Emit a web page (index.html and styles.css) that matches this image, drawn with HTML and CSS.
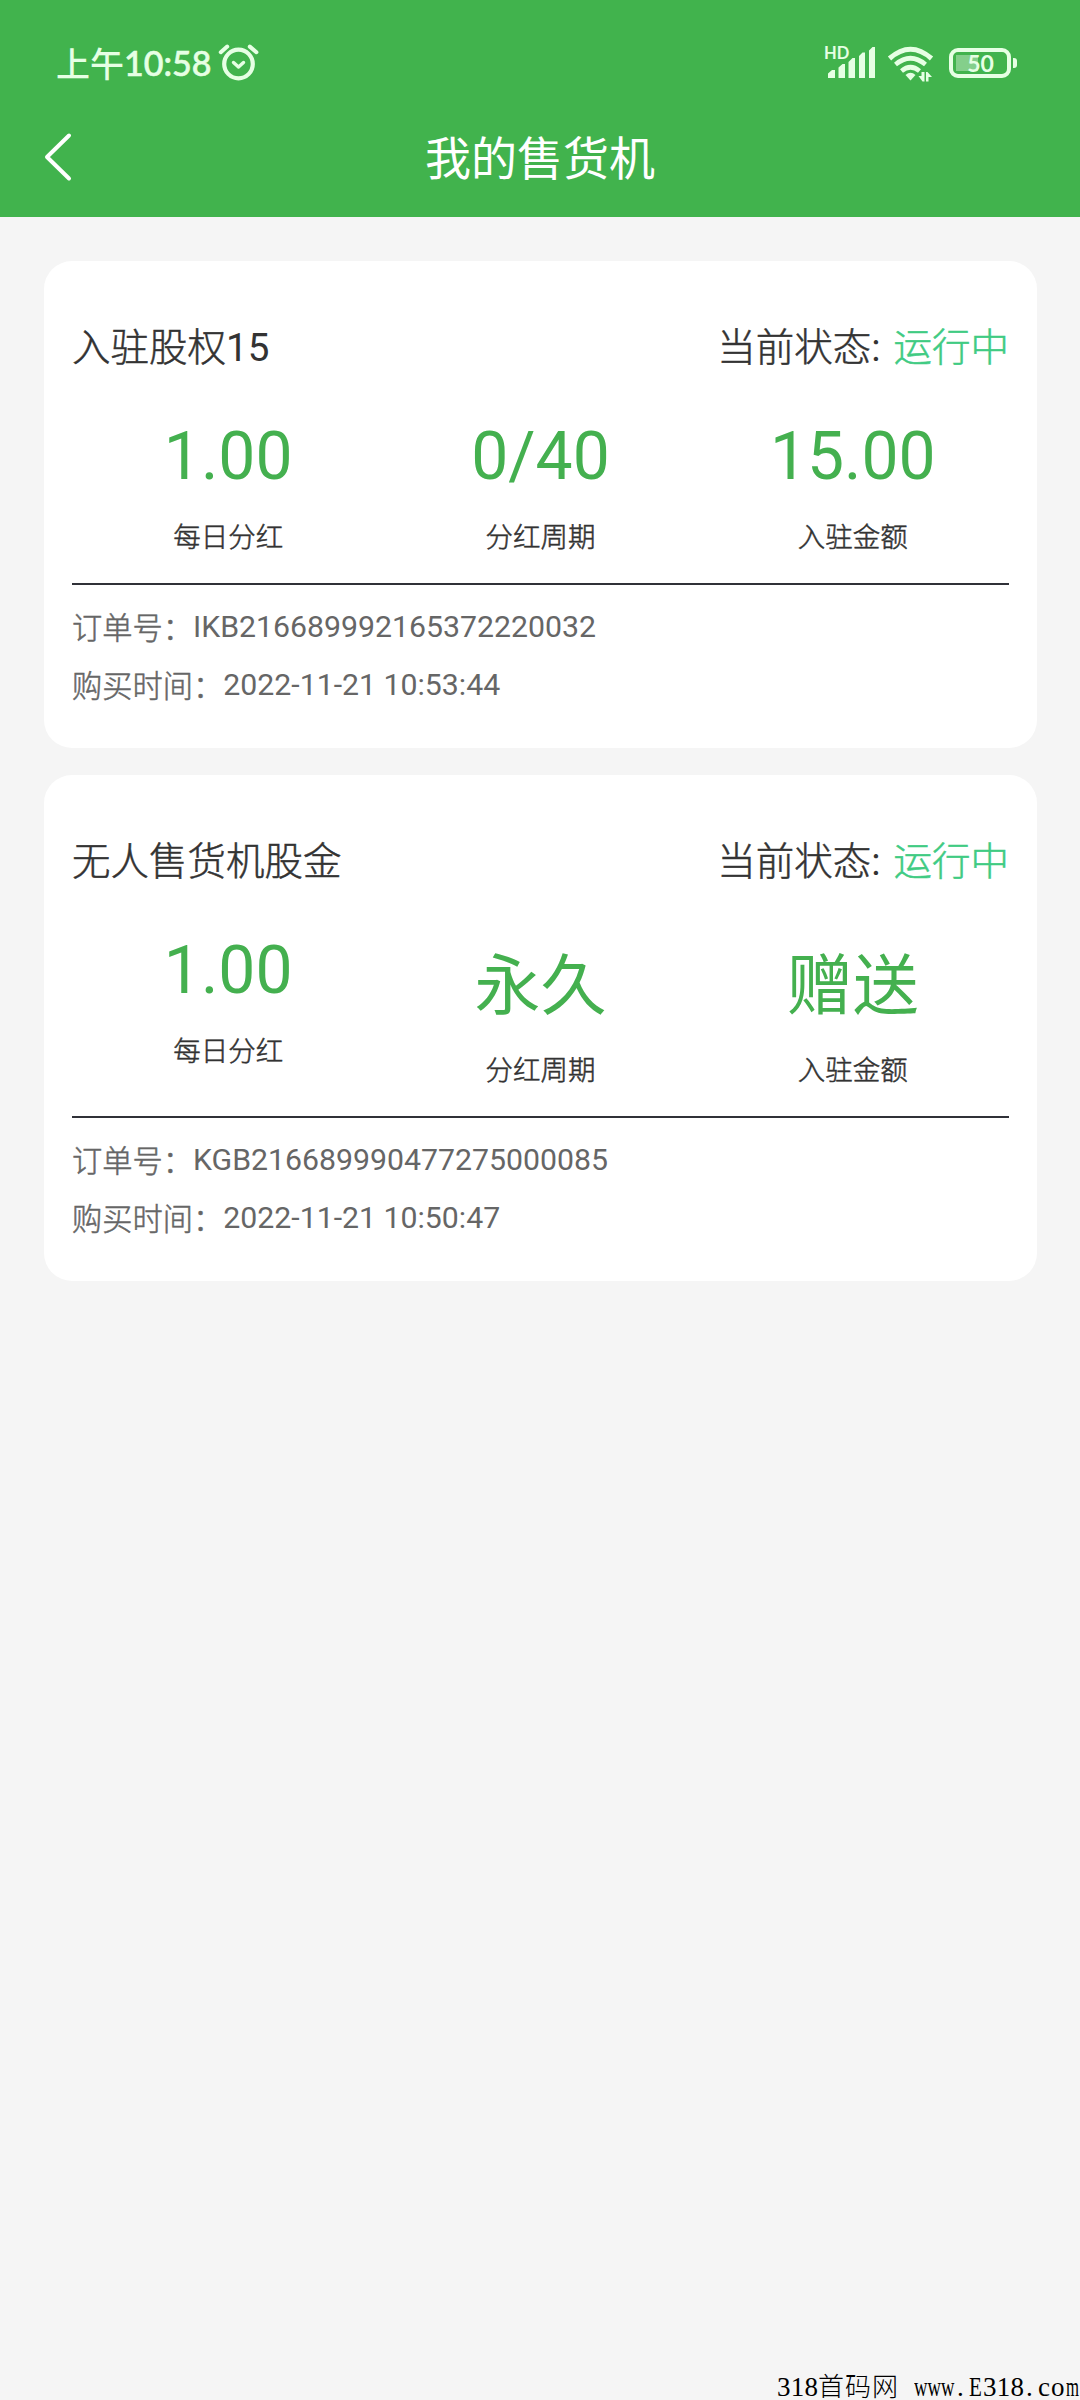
FILE: index.html
```html
<!DOCTYPE html>
<html lang="zh-CN">
<head>
<meta charset="utf-8">
<title>我的售货机</title>
<link rel="stylesheet" href="styles.css">
</head>
<body>
<header class="header">
  <div class="status-bar">
    <div class="clock">
      <span class="period">上午</span><span class="time">10:58</span>
      <svg class="alarm" width="42" height="40" viewBox="0 0 42 40" fill="none" stroke="currentColor" stroke-linecap="round" stroke-linejoin="round">
        <circle cx="20.5" cy="21" r="14.3" stroke-width="4.2"/>
        <path d="M15.5 19.5l5 4.5 5-4.5" stroke-width="3.4"/>
        <path d="M2.8 9.2L9.2 3.6M31.8 3.6l6.6 5.6" stroke-width="4"/>
      </svg>
    </div>
    <div class="indicators">
      <div class="signal">
        <span class="hd">HD</span>
        <svg class="bars" width="50" height="36" viewBox="0 0 50 36" fill="currentColor">
          <path d="M2 33v-4.500l4-3.500h3v8zM12.500 33V22.500l4-3.500h2.500v14zM22.500 33V17l4-4H29v20zM33 33V11l3.500-3.500H39V33zM43 33V5.500L46.500 2H49v31z"/>
        </svg>
      </div>
      <svg class="wifi" width="48" height="38" viewBox="0 0 48 38" fill="none" stroke="currentColor">
        <path d="M2.500 13.500Q23.500-5 44.500 13.500" stroke-width="5"/>
        <path d="M8.500 19.500Q23.500 7 38.500 19.500" stroke-width="4.600"/>
        <path d="M14.500 26Q23.500 18.500 32.500 26" stroke-width="4.600"/>
        <path d="M18.500 30Q23.500 25.500 28.500 30L23.500 35.500z" fill="currentColor" stroke="none"/>
        <path d="M37.500 27v9.500H35.500L31.500 31H34.500v-4zM39 36.500V27h1.500l4.500 5h-3.500v4.500z" fill="currentColor" stroke="none"/>
      </svg>
      <div class="battery"><span class="battery-text">50</span></div>
    </div>
  </div>
  <div class="nav">
    <svg class="back" width="30" height="50" viewBox="0 0 30 50" fill="none" stroke="#fff" stroke-width="4" stroke-linecap="round" stroke-linejoin="round"><path d="M26 3.500L4 25l22 21.500"/></svg>
    <h1 class="nav-title">我的售货机</h1>
  </div>
</header>
<main class="list">
  <section class="card">
    <div class="card-head">
      <h2 class="name">入驻股权<span class="latin">15</span></h2>
      <div class="state">当前状态<span class="latin colon">:</span><span class="running">运行中</span></div>
    </div>
    <div class="stats">
      <div class="stat"><div class="value">1.00</div><div class="label">每日分红</div></div>
      <div class="stat"><div class="value">0/40</div><div class="label">分红周期</div></div>
      <div class="stat"><div class="value">15.00</div><div class="label">入驻金额</div></div>
    </div>
    <div class="meta">
      <div class="meta-row">订单号：<span class="latin">IKB216689992165372220032</span></div>
      <div class="meta-row">购买时间：<span class="latin">2022-11-21 10:53:44</span></div>
    </div>
  </section>
  <section class="card">
    <div class="card-head">
      <h2 class="name">无人售货机股金</h2>
      <div class="state">当前状态<span class="latin colon">:</span><span class="running">运行中</span></div>
    </div>
    <div class="stats">
      <div class="stat"><div class="value">1.00</div><div class="label">每日分红</div></div>
      <div class="stat"><div class="value value-han">永久</div><div class="label">分红周期</div></div>
      <div class="stat"><div class="value value-han">赠送</div><div class="label">入驻金额</div></div>
    </div>
    <div class="meta">
      <div class="meta-row">订单号：<span class="latin">KGB216689990477275000085</span></div>
      <div class="meta-row">购买时间：<span class="latin">2022-11-21 10:50:47</span></div>
    </div>
  </section>
</main>
<footer class="watermark"><span class="num">318</span><span class="site">首码网</span><span class="www">www</span><span class="dot">.</span><span class="e">E</span><span class="num">318</span><span class="dot">.</span><span class="co">co</span><span class="m">m</span></footer>
</body>
</html>
```
FILE: styles.css
```css
* { box-sizing: border-box; }
body {
  margin: 0;
  height: 2400px;
  display: flex;
  flex-direction: column;
  background: #f5f5f5;
  color: #333;
  font-family: "Noto Sans CJK SC", sans-serif;
  font-weight: 300;
  overflow: hidden;
}
h1, h2 { margin: 0; font-weight: inherit; font-size: inherit; }
.latin { font-family: Roboto, sans-serif; font-weight: 400; line-height: 0; -webkit-text-stroke: 0; }

.header { height: 217px; background: #41b34d; color: #e6ffe4; }
.status-bar {
  height: 100px;
  padding: 28px 62px 0 56px;
  display: flex;
  justify-content: space-between;
}
.clock { display: flex; height: 70px; line-height: 70px; }
.period { font-size: 34px; font-weight: 500; }
.time { font-family: Lato, sans-serif; font-size: 34px; font-weight: 500; -webkit-text-stroke: .6px currentColor; }
.alarm { margin: 15px 0 0 7px; }
.indicators { display: flex; }
.signal { display: grid; margin-top: 17px; }
.signal > * { grid-area: 1 / 1; }
.hd { margin-left: -2px; font: 700 16.5px/16px Lato, sans-serif; }
.wifi { margin: 17px 0 0 11px; }
.battery {
  position: relative;
  width: 62px;
  height: 30px;
  margin: 20px 7px 0 14px;
  border: 4px solid currentColor;
  border-radius: 9px;
  background: linear-gradient(#84cf8b, #84cf8b) 3px 3px / 22px 16px no-repeat;
  text-align: center;
}
.battery::after {
  content: "";
  position: absolute;
  right: -10px;
  top: 6px;
  width: 4px;
  height: 10px;
  border-radius: 0 3px 3px 0;
  background: currentColor;
}
.battery-text { display: block; padding-left: 1px; font: 700 23px/22px Lato, sans-serif; }

.nav { height: 117px; display: grid; grid-template-columns: 80px 1fr 80px; align-items: start; }
.back { margin: 32px 0 0 43px; }
.nav-title { text-align: center; color: #fff; font-size: 46px; line-height: 68px; margin-top: 21px; font-weight: 400; }

.list { flex: 1; display: flex; flex-direction: column; gap: 27px; padding: 44px 43px 0 44px; }
.card { padding: 55px 28px 42px 28px; border-radius: 28px; background: #fff; -webkit-text-stroke: .5px currentColor; }
.card-head { display: flex; justify-content: space-between; height: 57px; font-size: 38.5px; line-height: 56px; }
.colon { margin-right: 13px; }
.running { color: #40cb83; }
.stats { display: grid; grid-template-columns: repeat(3, 1fr); margin-top: 45px; padding-bottom: 28px; border-bottom: 2px solid #303138; text-align: center; }
.value { font-family: Roboto, sans-serif; font-weight: 400; font-size: 66px; line-height: 77px; color: #44b04f; -webkit-text-stroke: 0; }
.value-han { font-family: "Noto Sans CJK SC", sans-serif; line-height: 96px; }
.label { font-size: 27.5px; line-height: 40px; margin-top: 20px; }
.meta { padding-top: 19px; font-size: 30.25px; color: #666; }
.meta-row { height: 44px; line-height: 44px; }
.meta-row + .meta-row { margin-top: 14px; }
.meta .latin { vertical-align: 2px; }

.watermark {
  display: flex;
  align-self: flex-end;
  height: 29px;
  line-height: 32px;
  font-family: "Liberation Serif", serif;
  font-size: 27px;
  font-weight: 400;
  color: #000;
}
.num { width: 41px; letter-spacing: .2px; }
.site { width: 96px; font-family: "Noto Sans CJK SC", sans-serif; font-size: 26px; line-height: 28px; font-weight: 300; letter-spacing: 1px; }
.www { width: 41px; transform: scaleX(.69); transform-origin: left; }
.dot { width: 14px; padding-left: 2px; }
.e { width: 14px; transform: scaleX(.78); transform-origin: left; }
.co { width: 28px; letter-spacing: 1px; }
.m { width: 14px; transform: scaleX(.62); transform-origin: left; }
```
